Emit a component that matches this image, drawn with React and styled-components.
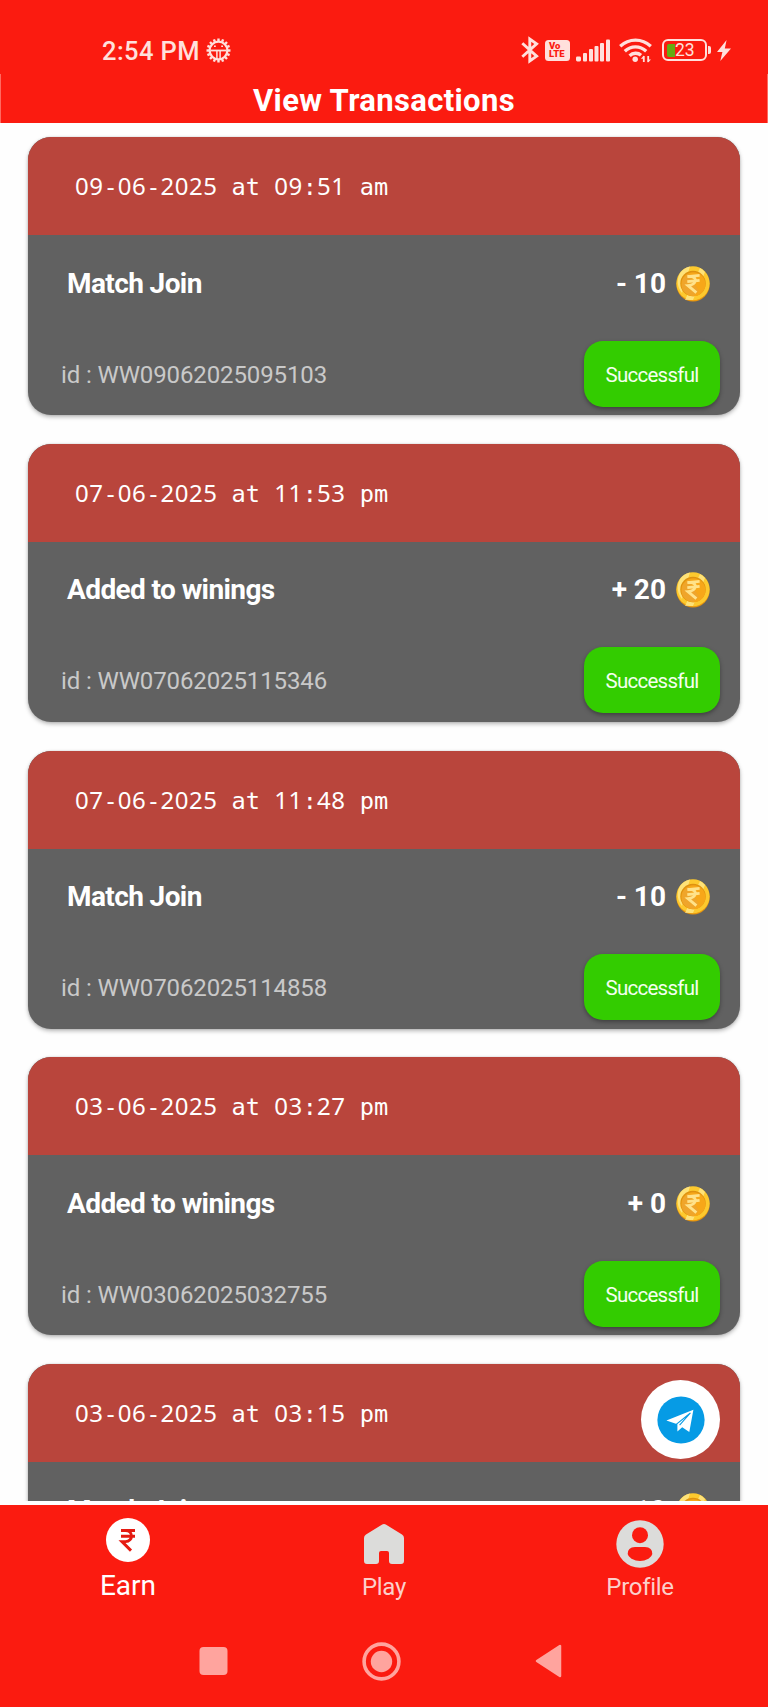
import React from "react";
import styled, { createGlobalStyle } from "styled-components";

const RED = "#fb1b10";
const PALE = "#ffe0dc";

const GlobalStyle = createGlobalStyle`
  * { box-sizing: border-box; }
  body { margin: 0; background: #fff; font-family: Roboto, "Liberation Sans", sans-serif; }
  svg { display: block; flex: none; }
`;

const Screen = styled.div`
  width: 768px;
  height: 1707px;
  display: flex;
  flex-direction: column;
  position: relative;
  overflow: hidden;
  background: #fefefe;
`;

const StatusBar = styled.header`
  height: 74px;
  flex: none;
  background: ${RED};
  display: flex;
  align-items: center;
  padding: 26px 37px 0 102px;
  color: ${PALE};
`;

const Clock = styled.span`
  font-size: 25.5px;
  line-height: 30px;
  font-weight: 500;
  letter-spacing: 0.4px;
  margin-right: 6px;
  padding-top: 2px;
`;

const StatusIcons = styled.div`
  margin-left: auto;
  display: flex;
  align-items: center;
`;

const Slot = styled.span`
  display: block;
  margin-left: ${(p) => p.$gap}px;
`;

const TitleBar = styled.div`
  height: 49px;
  flex: none;
  background: ${RED};
  border-left: 1px solid #ff6a60;
  border-right: 1px solid #ff6a60;
  display: flex;
  justify-content: center;
  padding-top: 9px;
`;

const Title = styled.h1`
  margin: 0;
  color: #fff;
  font-size: 31px;
  line-height: 36px;
  font-weight: 700;
  letter-spacing: 0.35px;
  white-space: nowrap;
`;

const List = styled.main`
  height: 1378px;
  flex: none;
  overflow: hidden;
  display: flex;
  flex-direction: column;
  gap: 28.75px;
  padding: 14px 28px 0 28px;
`;

const Card = styled.article`
  height: 278px;
  flex: none;
  border-radius: 23px;
  background: #616161;
  overflow: hidden;
  box-shadow: 0 2px 4px rgba(0, 0, 0, 0.28), 0 0 2px rgba(0, 0, 0, 0.15);
`;

const CardHead = styled.div`
  height: 98px;
  background: #b9453c;
  color: #fff;
  padding: 34px 0 0 47px;
  font-family: "DejaVu Sans Mono", monospace;
  font-size: 23.65px;
  line-height: 30px;
  white-space: pre;
`;

const Digits = styled.span`
  font-family: "Noto Sans", sans-serif;
  font-size: 24px;
  letter-spacing: 0.51px;
`;

const MainRow = styled.div`
  height: 97px;
  display: flex;
  align-items: center;
  padding: 0 30px 0 39px;
  color: #fff;
  font-size: 28px;
  line-height: 34px;
  font-weight: 700;
`;

const Name = styled.span`
  letter-spacing: -0.6px;
`;

const Amount = styled.span`
  margin-left: auto;
  margin-right: 10px;
`;

const FootRow = styled.div`
  height: 83px;
  display: flex;
  align-items: center;
  justify-content: space-between;
  padding: 0 20px 0 33px;
`;

const TransactionId = styled.span`
  color: #c9c9c9;
  font-size: 24px;
  line-height: 30px;
  letter-spacing: -0.12px;
  padding-top: 2px;
`;

const Status = styled.span`
  width: 136px;
  height: 66px;
  border-radius: 19px;
  background: #33cc00;
  color: #f4fff0;
  display: flex;
  align-items: center;
  justify-content: center;
  font-size: 20.5px;
  letter-spacing: -0.75px;
  padding-top: 2px;
  box-shadow: 0 2px 4px rgba(0, 0, 0, 0.35);
`;

const ChatButton = styled.button`
  position: absolute;
  left: 641px;
  top: 1380px;
  width: 79px;
  height: 79px;
  border: 0;
  padding: 0;
  border-radius: 50%;
  background: #fff;
  display: flex;
  align-items: center;
  justify-content: center;
`;

const TabBar = styled.nav`
  height: 112px;
  flex: none;
  margin-top: 4px;
  background: ${RED};
  display: flex;
`;

const Tab = styled.div`
  flex: 1;
  display: flex;
  flex-direction: column;
  align-items: center;
  color: ${(p) => (p.$active ? "#fff" : "#fbd0cb")};
  padding-top: ${(p) => (p.$active ? 13 : 15)}px;
`;

const TabIcon = styled.span`
  height: ${(p) => (p.$active ? 52 : 51)}px;
`;

const TabLabel = styled.span`
  font-size: ${(p) => (p.$active ? 28 : 24)}px;
  line-height: 32px;
  letter-spacing: ${(p) => (p.$active ? 0 : -0.3)}px;
`;

const SystemNav = styled.footer`
  flex: 1;
  background: ${RED};
  display: flex;
  align-items: flex-start;
  padding: 24px 0 0 199px;
  gap: 134px;
`;

const SystemKey = styled.span`
  display: flex;
  align-items: center;
  height: 40px;
`;

const teeth = Array.from({ length: 16 }, (_, i) => i * 22.5);

function GearIcon() {
  return (
    <svg width="25" height="25" viewBox="-12.5 -12.5 25 25" fill="none" stroke={PALE}>
      <circle r="8.9" strokeWidth="2.3" />
      {teeth.map((a) => (
        <path key={a} d="M0-9.5V-12" strokeWidth="2.4" transform={`rotate(${a})`} />
      ))}
      <path d="M-8 0H8" strokeWidth="1.8" />
      <path d="M-1.6 .5V8M1.6 .5V8" strokeWidth="1.5" />
      <path d="M-4.5-4.3h1.8M2.7-4.3h1.8" strokeWidth="1.6" />
    </svg>
  );
}

function BluetoothIcon() {
  return (
    <svg width="18" height="28" viewBox="0 0 18 28" fill="none" stroke={PALE} strokeWidth="2.9" strokeLinejoin="miter">
      <path d="M1.3 7.2 15.6 20.2 8.8 25V3L15.6 7.8 1.3 20.8" />
    </svg>
  );
}

const LteBox = styled.span`
  width: 25px;
  height: 21px;
  border-radius: 3.5px;
  background: ${PALE};
  color: ${RED};
  display: flex;
  flex-direction: column;
  align-items: flex-start;
  padding: 2px 0 0 4px;
  font-size: 9.5px;
  line-height: 8.5px;
  font-weight: 900;
`;

function SignalIcon() {
  return (
    <svg width="34" height="23" viewBox="0 0 34 23" fill={PALE}>
      <rect x="0" y="17.5" width="5" height="5" rx="1.4" />
      <rect x="7" y="14" width="4" height="8.5" rx="1" />
      <rect x="13" y="10" width="4" height="12.5" rx="1" />
      <rect x="18.5" y="7" width="4" height="15.5" rx="1" />
      <rect x="24" y="4" width="4" height="18.5" rx="1" />
      <rect x="30" y="0.5" width="4" height="22" rx="1" />
    </svg>
  );
}

function WifiIcon() {
  return (
    <svg width="33" height="25" viewBox="0 0 33 25" fill="none" stroke={PALE} strokeWidth="3.3">
      <path d="M1.2 8.3C10 .1 23 .1 31.8 8.3" />
      <path d="M5.8 13.2C12 7.4 21 7.4 27.2 13.2" />
      <path d="M10.6 17.8C14 14.5 19 14.5 22 17.2" />
      <circle cx="16.2" cy="21.3" r="2.7" fill={PALE} stroke="none" />
      <path d="M24.8 24V18M29.2 18v6" strokeWidth="1.8" />
      <path d="M21.8 20.8l3.2-3.4v3.4zM32 21.4l-3.2 3.4v-3.4z" fill={PALE} stroke="none" />
    </svg>
  );
}

const Battery = styled.span`
  display: flex;
  align-items: center;
  width: 45px;
  height: 22px;
  border: 2px solid ${PALE};
  border-radius: 6px;
  padding-left: 3px;
  color: ${PALE};
  font-size: 17.5px;
  line-height: 20px;
  position: relative;

  &::after {
    content: "";
    position: absolute;
    right: -6px;
    top: 5px;
    width: 3px;
    height: 8px;
    border-radius: 0 2px 2px 0;
    background: ${PALE};
  }
`;

const Charge = styled.i`
  width: 8px;
  height: 13px;
  border-radius: 2px 0 0 2px;
  background: #65ab12;
`;

function BoltIcon() {
  return (
    <svg width="14" height="21" viewBox="0 0 14 21" fill={PALE}>
      <path d="M9.6 0 0 12h5.4L3.3 21 14 8.6H7.8z" />
    </svg>
  );
}

function CoinIcon() {
  return (
    <svg width="34" height="36" viewBox="0 0 34 36">
      <ellipse cx="17" cy="18.6" rx="16.6" ry="17" fill="#e8950d" />
      <ellipse cx="17" cy="17.3" rx="16.6" ry="17" fill="#fdc92e" />
      <path d="M4 7A16.6 17 0 0 1 14 .6L6 27A16.6 17 0 0 1 4 7zM24 2A16.6 17 0 0 1 29 6L17 34H9z" fill="#fff0a0" opacity=".65" />
      <circle cx="17" cy="17.5" r="12.7" fill="#df9210" />
      <circle cx="17.4" cy="18.2" r="12" fill="#f7a719" />
      <path d="M6.5 13 12 7.5 23 25 17 30Q8 29 5.8 21z" fill="#e9a437" opacity=".6" />
      <path d="M11.3 10.6 23.6 9.4M11.3 15.6 23.6 14.4M12 10.4c9.8-1 9.8 8.4 0 9.2l8.4 7" fill="none" stroke="#ffe28a" strokeWidth="2.8" />
    </svg>
  );
}

function TelegramIcon() {
  return (
    <svg width="48" height="48" viewBox="0 0 48 48">
      <circle cx="24" cy="24" r="23.6" fill="#069be5" />
      <path d="M9.4 24.4 36.4 13.7 32.3 36 25.2 31.2 20.4 35.6V28.2z" fill="#fff" />
      <path d="M19.2 28.4 33.4 17 22.6 29.2" fill="none" stroke="#069be5" strokeWidth="1.1" />
    </svg>
  );
}

function EarnIcon() {
  return (
    <svg width="44" height="44" viewBox="0 0 44 44">
      <circle cx="22" cy="22" r="22" fill="#fff" />
      <path d="M15 12.5h14M15 18.2h14M15 12.5h4.5c8 0 8 11.1 0 11.1H16l9 9" fill="none" stroke="#e51b12" strokeWidth="2.9" />
    </svg>
  );
}

function HomeIcon() {
  return (
    <svg width="40" height="45" viewBox="0 0 40 45">
      <path d="M17.8 4.8Q20 3.4 22.2 4.8L38 14.4Q40 15.8 40 18V41Q40 44 37 44H28Q25 44 25 41V33Q25 31 23 31H17Q15 31 15 33V41Q15 44 12 44H3Q0 44 0 41V18Q0 15.8 2 14.4z" fill="#dcdcda" />
    </svg>
  );
}

function ProfileIcon() {
  return (
    <svg width="48" height="48" viewBox="0 0 48 48">
      <circle cx="24" cy="24" r="23.7" fill="#dcdcda" />
      <circle cx="24" cy="15.2" r="8" fill={RED} />
      <path d="M19 27H29Q36.5 27.3 36.3 34Q36 36.5 32.5 38.8Q24 43.4 15.5 38.8Q12 36.5 11.7 34Q11.5 27.3 19 27z" fill={RED} />
    </svg>
  );
}

function DateStamp({ value }) {
  return (
    <CardHead>
      {value.split(/(\d+)/).map((part, i) => (/^\d/.test(part) ? <Digits key={i}>{part}</Digits> : part))}
    </CardHead>
  );
}

const transactions = [
  { date: "09-06-2025 at 09:51 am", name: "Match Join", amount: "- 10", id: "WW09062025095103" },
  { date: "07-06-2025 at 11:53 pm", name: "Added to winings", amount: "+ 20", id: "WW07062025115346" },
  { date: "07-06-2025 at 11:48 pm", name: "Match Join", amount: "- 10", id: "WW07062025114858" },
  { date: "03-06-2025 at 03:27 pm", name: "Added to winings", amount: "+ 0", id: "WW03062025032755" },
  { date: "03-06-2025 at 03:15 pm", name: "Match Join", amount: "- 10" },
];

function Transaction({ date, name, amount, id }) {
  return (
    <Card>
      <DateStamp value={date} />
      <MainRow>
        <Name>{name}</Name>
        <Amount>{amount}</Amount>
        <CoinIcon />
      </MainRow>
      {id && (
        <FootRow>
          <TransactionId>id : {id}</TransactionId>
          <Status>Successful</Status>
        </FootRow>
      )}
    </Card>
  );
}

export default function App() {
  return (
    <Screen>
      <GlobalStyle />
      <StatusBar>
        <Clock>2:54 PM</Clock>
        <GearIcon />
        <StatusIcons>
          <BluetoothIcon />
          <Slot $gap={6}>
            <LteBox>
              <span>Vo</span>
              <span>LTE</span>
            </LteBox>
          </Slot>
          <Slot $gap={6}><SignalIcon /></Slot>
          <Slot $gap={9}><WifiIcon /></Slot>
          <Slot $gap={10}>
            <Battery><Charge />23</Battery>
          </Slot>
          <Slot $gap={10}><BoltIcon /></Slot>
        </StatusIcons>
      </StatusBar>
      <TitleBar>
        <Title>View Transactions</Title>
      </TitleBar>
      <List>
        {transactions.map((t) => (
          <Transaction key={t.date} {...t} />
        ))}
      </List>
      <ChatButton aria-label="Telegram">
        <TelegramIcon />
      </ChatButton>
      <TabBar>
        <Tab $active>
          <TabIcon $active><EarnIcon /></TabIcon>
          <TabLabel $active>Earn</TabLabel>
        </Tab>
        <Tab>
          <TabIcon><HomeIcon /></TabIcon>
          <TabLabel>Play</TabLabel>
        </Tab>
        <Tab>
          <TabIcon><ProfileIcon /></TabIcon>
          <TabLabel>Profile</TabLabel>
        </Tab>
      </TabBar>
      <SystemNav>
        <SystemKey>
          <svg width="29" height="28" viewBox="0 0 29 28">
            <rect x="0.5" width="28" height="28" rx="4" fill="#ffa49e" />
          </svg>
        </SystemKey>
        <SystemKey>
          <svg width="39" height="39" viewBox="0 0 39 39">
            <circle cx="19.5" cy="19.5" r="17.4" fill="none" stroke="#ffa49e" strokeWidth="3.6" />
            <circle cx="19.5" cy="19.5" r="10.7" fill="#ffa49e" />
          </svg>
        </SystemKey>
        <SystemKey>
          <svg width="27" height="34" viewBox="0 0 27 34">
            <path d="M25 2V32L2 17z" fill="#ffa49e" stroke="#ffa49e" strokeWidth="2.5" strokeLinejoin="round" />
          </svg>
        </SystemKey>
      </SystemNav>
    </Screen>
  );
}
